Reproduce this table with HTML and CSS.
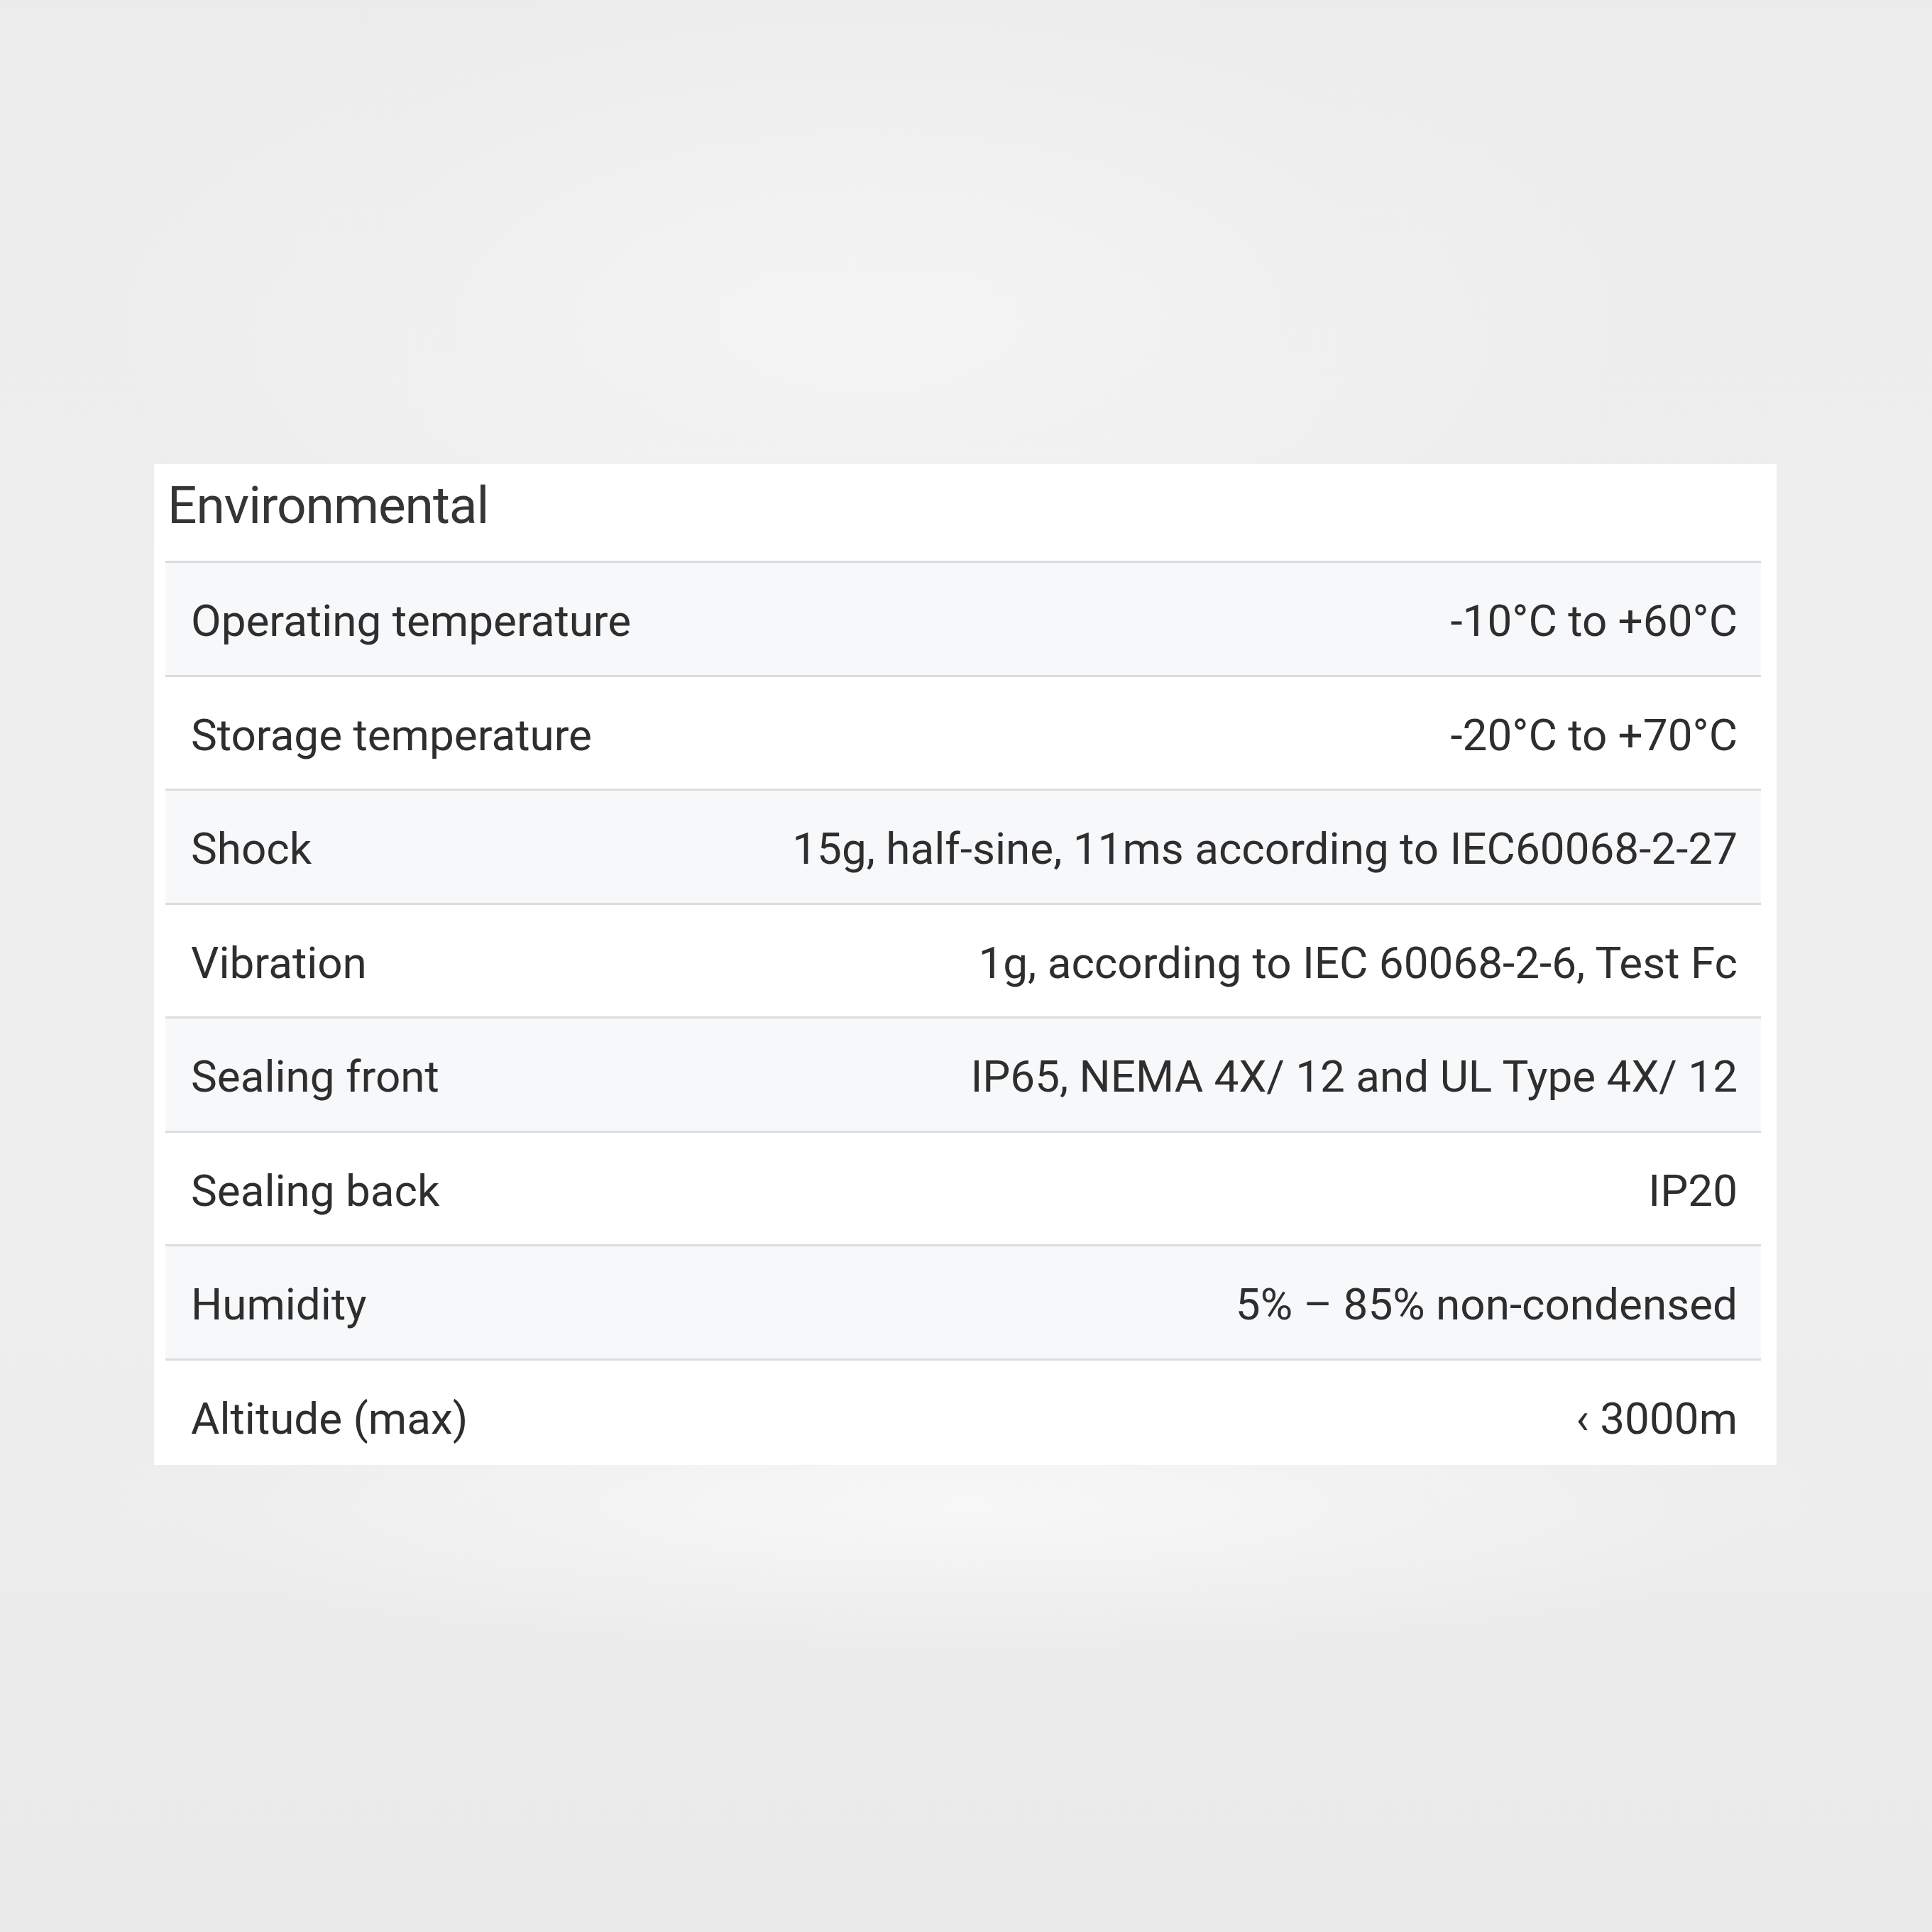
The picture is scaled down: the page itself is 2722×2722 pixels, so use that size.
FILE: index.html
```html
<!DOCTYPE html>
<html lang="en">
<head>
<meta charset="utf-8">
<title>Environmental</title>
<link rel="stylesheet" href="styles.css">
</head>
<body>
<div class="stage">
  <section class="panel">
    <h2 class="panel-title">Environmental</h2>
    <div class="specs">
      <div class="row alt"><span class="label">Operating temperature</span><span class="value">-10°C to +60°C</span></div>
      <div class="row"><span class="label">Storage temperature</span><span class="value">-20°C to +70°C</span></div>
      <div class="row alt"><span class="label">Shock</span><span class="value">15g, half-sine, 11ms according to IEC60068-2-27</span></div>
      <div class="row"><span class="label">Vibration</span><span class="value">1g, according to IEC 60068-2-6, Test Fc</span></div>
      <div class="row alt"><span class="label">Sealing front</span><span class="value">IP65, NEMA 4X/ 12 and UL Type 4X/ 12</span></div>
      <div class="row"><span class="label">Sealing back</span><span class="value">IP20</span></div>
      <div class="row alt"><span class="label">Humidity</span><span class="value">5% – 85% non-condensed</span></div>
      <div class="row last"><span class="label">Altitude (max)</span><span class="value">‹ 3000m</span></div>
    </div>
  </section>
</div>
</body>
</html>
```
FILE: styles.css
```css
html, body {
  margin: 0;
  padding: 0;
}

body {
  width: 2722px;
  height: 2722px;
  overflow: hidden;
  font-family: Roboto, "Liberation Sans", sans-serif;
  color: #333;
  background:
    radial-gradient(ellipse 1600px 260px at 50% 2120px, rgba(255,255,255,0.6), rgba(255,255,255,0) 80%),
    radial-gradient(ellipse 1500px 700px at 45% 450px, rgba(255,255,255,0.4), rgba(255,255,255,0) 75%),
    linear-gradient(180deg, #ececed 0%, #eeeeef 30%, #eeeeef 65%, #eaeaeb 100%);
}

.stage {
  box-sizing: border-box;
  width: 2722px;
  height: 2722px;
  padding: 654px 0 0 217px;
}

.panel {
  box-sizing: border-box;
  width: 2286px;
  background: #ffffff;
  padding: 0 22px 0 16px;
}

.panel-title {
  margin: 0 0 34px 3px;
  padding-top: 15px;
  font-size: 73px;
  line-height: 87px;
  font-weight: 400;
  color: #353535;
  letter-spacing: -1px;
}

.specs {
  display: flex;
  flex-direction: column;
}

.row {
  box-sizing: border-box;
  height: 160.5px;
  border-top: 3px solid #dcdcdc;
  padding: 45px 33px 0 36px;
  display: flex;
  justify-content: space-between;
  align-items: flex-start;
  font-size: 62px;
  line-height: 74px;
  color: #2e2e2e;
}

.row.alt {
  background: #f7f8fa;
}

.row.last {
  height: 150px;
}

.label,
.value {
  white-space: nowrap;
}
```
